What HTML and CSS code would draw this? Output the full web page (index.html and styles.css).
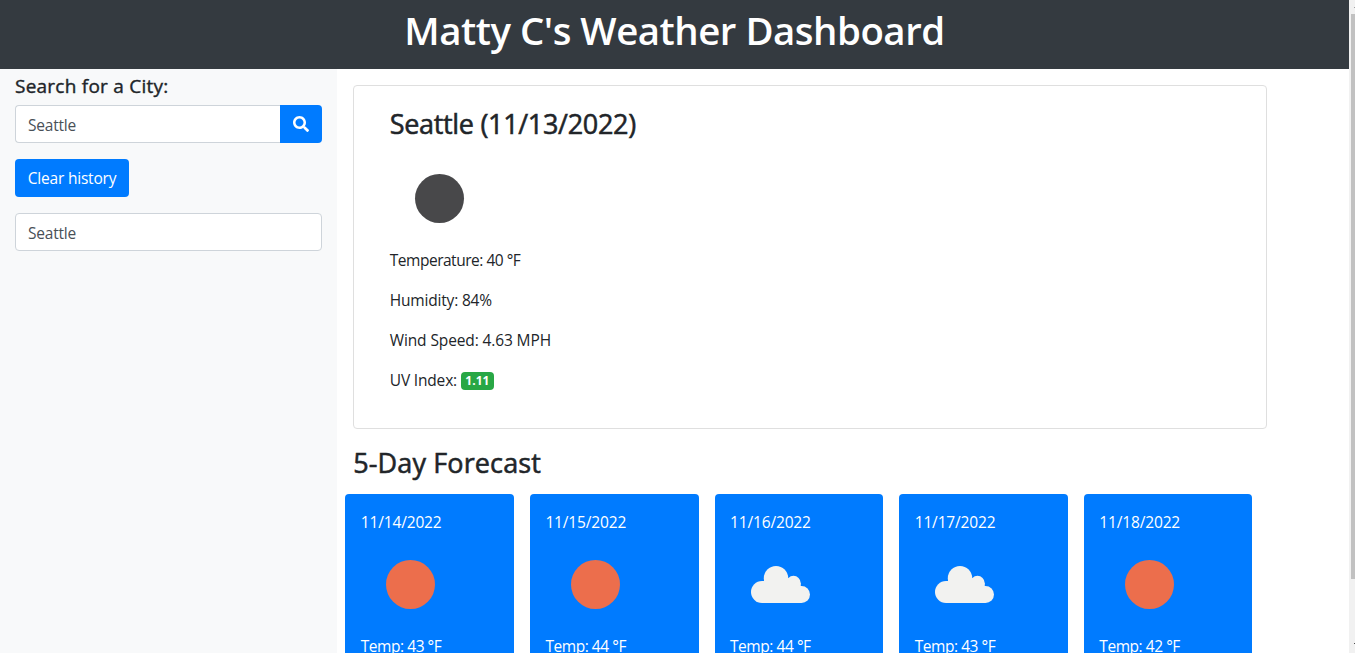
FILE: index.html
```html
<!DOCTYPE html>
<html lang="en">
<head>
<meta charset="utf-8">
<title>Weather Dashboard</title>
<link rel="stylesheet" href="styles.css">
</head>
<body>
<svg width="0" height="0" class="defs">
  <symbol id="cloud" viewBox="0 0 100 100">
    <circle cx="31" cy="58" r="11"/><circle cx="45" cy="44.200" r="12.200"/><circle cx="62.500" cy="49" r="7.200"/><circle cx="70.500" cy="60.500" r="8.500"/><path d="M31 47H33V44H57.200V44L69.700 49V52H70.500V69H31Z"/>
  </symbol>
</svg>
<div class="page">
  <header class="header"><h1 class="title">Matty C's Weather Dashboard</h1></header>
  <div class="columns">
    <aside class="sidebar">
      <h2 class="search-label">Search for a City:</h2>
      <div class="search-group">
        <div class="field search-field">Seattle</div>
        <button class="btn search-btn" aria-label="Search">
          <svg width="16" height="16" viewBox="0 0 512 512" fill="currentColor"><path d="M505 442.700 405.300 343c-4.500-4.500-10.600-7-17-7H372c27.600-35.300 44-79.700 44-128C416 93.100 322.900 0 208 0S0 93.100 0 208s93.100 208 208 208c48.300 0 92.700-16.400 128-44v16.300c0 6.400 2.500 12.500 7 17l99.700 99.700c9.400 9.400 24.600 9.400 33.900 0l28.300-28.300c9.400-9.400 9.400-24.600.1-34zM208 336c-70.700 0-128-57.200-128-128 0-70.700 57.200-128 128-128 70.700 0 128 57.200 128 128 0 70.700-57.200 128-128 128z"/></svg>
        </button>
      </div>
      <button class="btn clear-btn">Clear history</button>
      <div class="field">Seattle</div>
    </aside>
    <main class="main">
      <section class="current">
        <h2 class="city">Seattle (11/13/2022)</h2>
        <svg class="icon" viewBox="0 0 100 100"><circle cx="49.500" cy="50.500" r="24.500" fill="#48484a"/></svg>
        <p class="stat t-temp">Temperature: 40 °F</p>
        <p class="stat t-hum">Humidity: 84%</p>
        <p class="stat t-wind">Wind Speed: 4.63 MPH</p>
        <p class="stat t-uv">UV Index: <span class="badge">1.11</span></p>
      </section>
      <h2 class="forecast-title">5-Day Forecast</h2>
      <div class="forecast">
        <div class="day"><p class="date">11/14/2022</p><svg class="icon" viewBox="0 0 100 100"><circle cx="49.500" cy="50.500" r="24.500" fill="#ec6e4c"/></svg><p class="temp">Temp: 43 °F</p></div>
        <div class="day"><p class="date">11/15/2022</p><svg class="icon" viewBox="0 0 100 100"><circle cx="49.500" cy="50.500" r="24.500" fill="#ec6e4c"/></svg><p class="temp">Temp: 44 °F</p></div>
        <div class="day"><p class="date">11/16/2022</p><svg class="icon cloud"><use href="#cloud"/></svg><p class="temp">Temp: 44 °F</p></div>
        <div class="day"><p class="date">11/17/2022</p><svg class="icon cloud"><use href="#cloud"/></svg><p class="temp">Temp: 43 °F</p></div>
        <div class="day"><p class="date">11/18/2022</p><svg class="icon" viewBox="0 0 100 100"><circle cx="49.500" cy="50.500" r="24.500" fill="#ec6e4c"/></svg><p class="temp">Temp: 42 °F</p></div>
      </div>
    </main>
  </div>
</div>
<div class="scrollbar"><i class="arrow up"></i><div class="thumb"></div><i class="arrow down"></i></div>
</body>
</html>
```
FILE: styles.css
```css
* { box-sizing: border-box; }
body {
  margin: 0;
  height: 653px;
  overflow: hidden;
  display: flex;
  background: #fff;
  color: #212529;
  font: 400 15.5px/24px "Open Sans", "Noto Sans", sans-serif;
}
h1, h2, p { margin: 0; }
h1, h2 { font-weight: 400; white-space: nowrap; -webkit-text-stroke: 0.550px currentColor; }
button { font: inherit; border: 0; margin: 0; }
.defs { width: 0; height: 0; flex: none; }
.page { width: 1349px; height: 653px; overflow: hidden; display: flex; flex-direction: column; }
.header { height: 69px; flex: none; background: #343a40; color: #fff; text-align: center; padding-top: 6px; }
.title { font-size: 38.400px; line-height: 48px; font-weight: 600; letter-spacing: -0.480px; -webkit-text-stroke: 0; }
.columns { display: flex; flex: 1; min-height: 0; }
.sidebar { width: 337.250px; flex: none; background: #f8f9fa; padding: 5px 15px; }
.search-label { font-size: 19px; line-height: 24px; margin-bottom: 7px; letter-spacing: 0.240px; -webkit-text-stroke-width: 0.400px; }
.search-group { display: flex; margin-bottom: 16px; }
.field {
  height: 38px;
  border: 1px solid #ced4da;
  border-radius: 4px;
  background: #fff;
  color: #495057;
  padding: 7px 12px 5px;
  letter-spacing: -0.200px;
}
.search-field { flex: 1; border-radius: 4px 0 0 4px; border-right: 0; }
.btn { height: 38px; background: #007bff; color: #fff; border-radius: 4px; }
.search-btn { width: 42px; padding: 0 0 1px; display: flex; align-items: center; justify-content: center; border-radius: 0 4px 4px 0; }
.clear-btn { display: block; width: 114px; padding: 0; margin-bottom: 16px; white-space: nowrap; letter-spacing: -0.200px; }
.main { flex: 1; padding: 16px 0 0 16px; }
.current { width: 914px; height: 344px; border: 1px solid #dfdfdf; border-radius: 4px; padding: 21px 35.500px 0; }
.city { font-size: 27px; line-height: 34px; margin-bottom: 7px; letter-spacing: -0.320px; }
.icon { display: block; width: 100px; height: 100px; }
.stat { height: 24px; margin-bottom: 16px; white-space: nowrap; }
.t-temp { letter-spacing: -0.480px; }
.t-hum { letter-spacing: -0.180px; }
.t-wind { letter-spacing: -0.120px; }
.t-uv { letter-spacing: -0.170px; }
.badge {
  display: inline-block;
  height: 18px;
  width: 33px;
  border-radius: 4px;
  background: #28a745;
  color: #fff;
  font-size: 12px;
  line-height: 18px;
  font-weight: 700;
  text-align: center;
  letter-spacing: 0;
  vertical-align: 1px;
}
.forecast-title { font-size: 27px; line-height: 34px; margin: 17px 0 14px; letter-spacing: 0.120px; }
.forecast { display: flex; gap: 16px; margin-left: -8px; width: 907.200px; }
.day { flex: 1; height: 250px; border-radius: 4px; background: #007bff; color: #fff; padding: 16px; }
.day p { white-space: nowrap; margin-left: -0.500px; }
.date { letter-spacing: -0.150px; }
.temp { letter-spacing: -0.450px; }
.cloud { fill: #f2f2f0; }
.scrollbar { width: 6px; height: 653px; background: #f1f1f1; display: flex; flex-direction: column; align-items: flex-end; }
.arrow { width: 1px; height: 1px; background: #505050; }
.up { margin: 7px 0 6px; background: #a3a3a3; }
.thumb { width: 4px; height: 565px; background: #c1c1c1; }
.down { margin-top: 64px; }
```
